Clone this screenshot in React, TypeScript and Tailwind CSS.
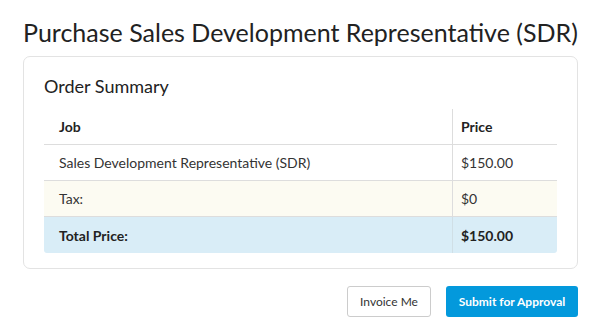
import React from "react";

export default function App() {
  return (
    <div className="w-[601px] h-[330px] bg-white text-[#333] font-['Lato','Open_Sans',sans-serif] px-[23px]">
      <h1 className="pt-[17px] text-[25px] leading-[30px] text-[#222] whitespace-nowrap">
        Purchase Sales Development Representative (SDR)
      </h1>
      <div className="mt-[9px] border border-[#e3e3e3] rounded-[7px] px-[20px] pb-[15px]">
        <div className="pt-[18px] text-[18px] leading-[22px] text-[#222]">Order Summary</div>
        <div className="mt-[12px] text-[14px]">
          <div className="flex h-[36px] border-b border-[#ddd] font-bold text-[#222]">
            <div className="flex-1 flex items-center pl-[15px]">Job</div>
            <div className="w-[105px] flex items-center pl-[8px] border-l border-[#ddd]">Price</div>
          </div>
          <div className="flex h-[36px] border-b border-[#ddd]">
            <div className="flex-1 flex items-center pl-[15px]">Sales Development Representative (SDR)</div>
            <div className="w-[105px] flex items-center pl-[8px] border-l border-[#ddd]">$150.00</div>
          </div>
          <div className="flex h-[36px] border-b border-[#ddd] bg-[#fcfbf2]">
            <div className="flex-1 flex items-center pl-[15px]">Tax:</div>
            <div className="w-[105px] flex items-center pl-[8px] border-l border-[#ddd]">$0</div>
          </div>
          <div className="flex h-[36px] bg-[#d9edf7] rounded-b-[3px] font-bold text-[#222]">
            <div className="flex-1 flex items-center pl-[15px]">Total Price:</div>
            <div className="w-[105px] flex items-center pl-[8px] border-l border-[#d0dfe6]">$150.00</div>
          </div>
        </div>
      </div>
      <div className="mt-[17px] flex justify-end gap-[15px] text-[12px]">
        <button className="h-[31px] w-[84px] border border-[#ccc] rounded-[3px] bg-white text-[#333]">
          Invoice Me
        </button>
        <button className="h-[31px] w-[132px] rounded-[3px] bg-[#0399dc] text-white font-bold">
          Submit for Approval
        </button>
      </div>
    </div>
  );
}
